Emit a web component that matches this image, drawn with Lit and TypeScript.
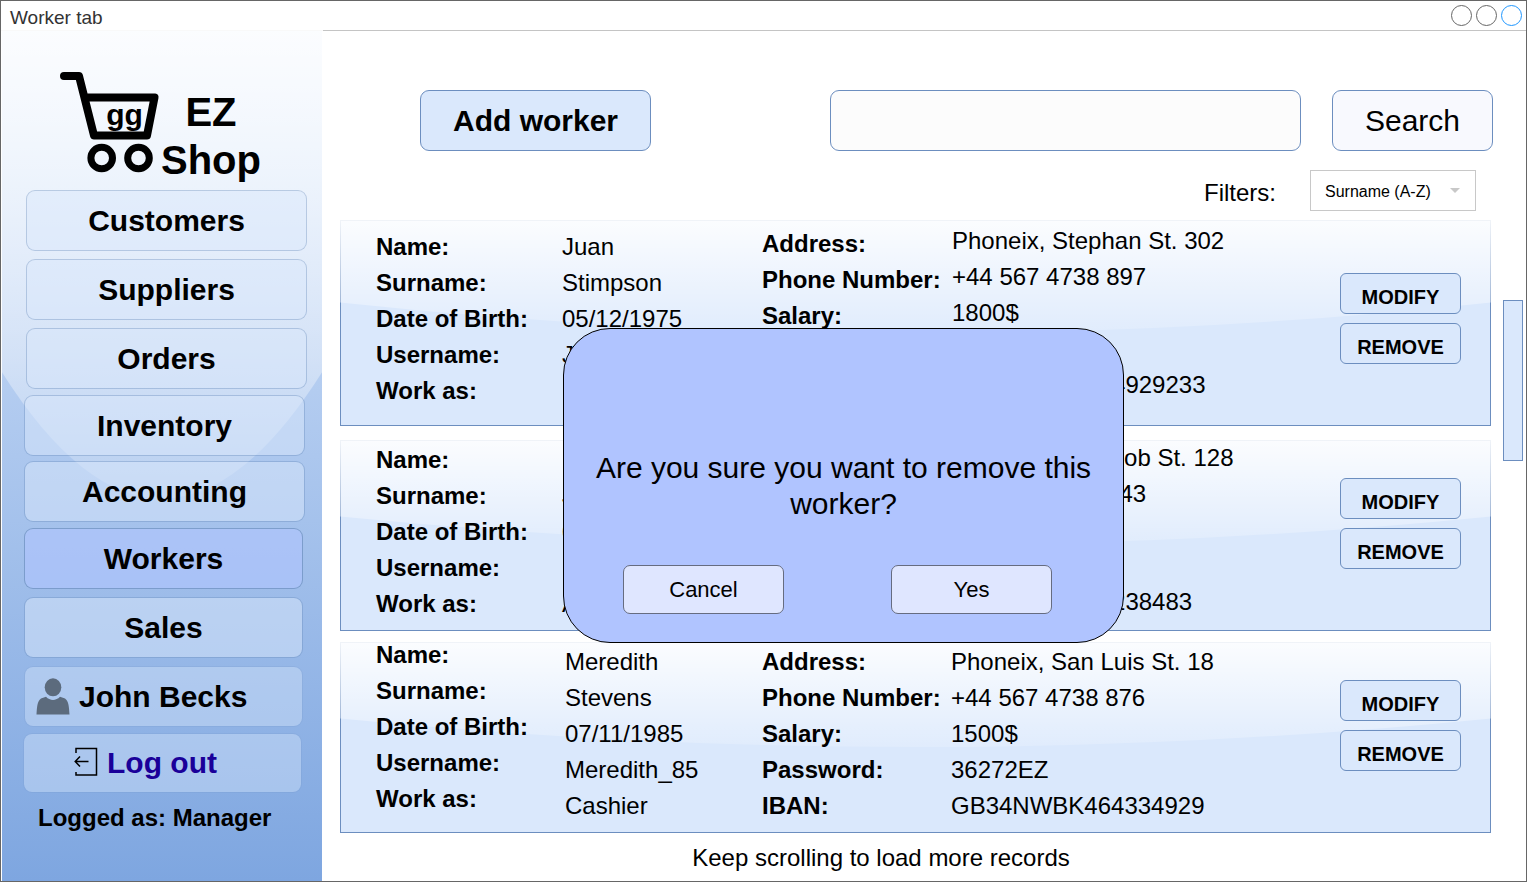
import { LitElement, html, css } from "lit";
import { customElement, property, state } from "lit/decorators.js";
import { classMap } from "lit/directives/class-map.js";

interface Worker {
  personal: string[];
  contact: string[];
  layout: string;
}

const PERSONAL_LABELS = ["Name:", "Surname:", "Date of Birth:", "Username:", "Work as:"];
const CONTACT_LABELS = ["Address:", "Phone Number:", "Salary:", "Password:", "IBAN:"];

const WORKERS: Worker[] = [
  {
    personal: ["Juan", "Stimpson", "05/12/1975", "Juan_75", "Manager"],
    contact: ["Phoneix, Stephan St. 302", "+44 567 4738 897", "1800$", "48213EZ", "GB34NWBK464929233"],
    layout: "roomy",
  },
  {
    personal: ["Robert", "Jackson", "03/08/1981", "Robert_81", "Accountant"],
    contact: ["Phoneix, W. Jacob St. 128", "+44 567 4738 843", "1600$", "59120EZ", "GB34NWBK46238483"],
    layout: "compact",
  },
  {
    personal: ["Meredith", "Stevens", "07/11/1985", "Meredith_85", "Cashier"],
    contact: ["Phoneix, San Luis St. 18", "+44 567 4738 876", "1500$", "36272EZ", "GB34NWBK464334929"],
    layout: "dense",
  },
];

const NAV_GROUPS = [
  { id: "first", items: ["Customers", "Suppliers", "Orders"] },
  { id: "second", items: ["Inventory", "Accounting"] },
];

/* Curved highlight that covers the upper part of a panel. */
const gloss = html`<svg class="gloss" viewBox="0 0 100 100" preserveAspectRatio="none" aria-hidden="true">
  <defs>
    <linearGradient id="shine" gradientUnits="userSpaceOnUse" x1="0" y1="0" x2="0" y2="60">
      <stop offset="0" stop-color="#fff" stop-opacity="0.9"></stop>
      <stop offset="1" stop-color="#fff" stop-opacity="0.1"></stop>
    </linearGradient>
  </defs>
  <path d="M0 0V40Q50 70 100 40V0Z" fill="url(#shine)"></path>
</svg>`;

const shared = css`
  * {
    box-sizing: border-box;
  }
  button,
  input,
  select {
    font: inherit;
    color: inherit;
    margin: 0;
    padding: 0;
  }
  button {
    cursor: pointer;
  }
  .gloss {
    position: absolute;
    inset: -1px;
    width: calc(100% + 2px);
    height: calc(100% + 2px);
    pointer-events: none;
  }
`;

@customElement("worker-card")
export class WorkerCard extends LitElement {
  @property({ attribute: false }) worker!: Worker;

  static styles = [
    shared,
    css`
      :host {
        display: flow-root;
      }
      .card {
        position: relative;
        display: grid;
        grid-template-columns: 186px 200px 190px 1fr 121px;
        padding: 0 29px 14px 35px;
        border: 1px solid #6c8ebf;
        background: #dae8fc;
        font-size: 24px;
        line-height: 24px;
      }
      .column {
        position: relative;
        display: flex;
        flex-direction: column;
        gap: 12px;
        white-space: nowrap;
      }
      .label {
        font-weight: bold;
      }
      .actions {
        position: relative;
        display: flex;
        flex-direction: column;
        gap: 9px;
        padding-top: 37px;
      }
      .action {
        height: 41px;
        padding-top: 6px;
        border: 1px solid #6c8ebf;
        border-radius: 6px;
        background: #dae8fc;
        font-size: 20px;
        font-weight: bold;
      }
      .roomy {
        margin-bottom: 3px;
        padding-bottom: 22px;
      }
      .roomy .personal {
        padding-top: 14px;
      }
      .roomy .contact.label {
        padding-top: 11px;
      }
      .roomy .contact {
        padding-top: 8px;
      }
      .roomy .actions {
        padding-top: 52px;
      }
      .compact .column {
        padding-top: 7px;
      }
      .compact .contact {
        padding-top: 5px;
      }
      .dense {
        grid-template-columns: 189px 197px 189px 1fr 121px;
      }
      .dense .column {
        padding-top: 7px;
      }
      .dense .personal.label {
        padding-top: 0;
      }
    `,
  ];

  private column(kind: string, lines: string[]) {
    return html`<div class="column ${kind}">${lines.map((l) => html`<span>${l}</span>`)}</div>`;
  }

  render() {
    const w = this.worker;
    return html`<article class="card ${w.layout}">
      ${gloss} ${this.column("personal label", PERSONAL_LABELS)} ${this.column("personal", w.personal)}
      ${this.column("contact label", CONTACT_LABELS)} ${this.column("contact", w.contact)}
      <div class="actions">
        <button class="action" type="button">MODIFY</button>
        <button class="action" type="button">REMOVE</button>
      </div>
    </article>`;
  }
}

@customElement("shop-sidebar")
export class ShopSidebar extends LitElement {
  @property() active = "Workers";

  static styles = [
    shared,
    css`
      :host {
        display: block;
        position: relative;
        background: linear-gradient(#dae8fc, #7ea6e0);
      }
      .content {
        position: relative;
      }
      .logo {
        display: flex;
        padding: 41px 0 0 57px;
      }
      .cart {
        width: 102px;
        height: 104px;
        flex: none;
      }
      .cart-text {
        font: bold 30px "Liberation Sans", Arial, sans-serif;
      }
      .brand {
        margin: 0;
        padding-top: 16px;
        width: 100px;
        font-size: 40px;
        line-height: 48px;
        text-align: center;
      }
      .nav {
        display: flex;
        flex-direction: column;
        gap: 6px;
        padding-top: 6px;
      }
      .group {
        display: flex;
        flex-direction: column;
        gap: 8px;
        padding: 0 19px 0 22px;
      }
      .first {
        padding: 0 15px 0 24px;
      }
      .second {
        gap: 5px;
        padding: 0 17px 0 22px;
      }
      .account {
        padding: 0 20px 0 21px;
      }
      .item {
        display: flex;
        align-items: center;
        justify-content: center;
        height: 61px;
        border: 1px solid rgba(108, 142, 191, 0.4);
        border-radius: 9px;
        background: rgba(218, 232, 252, 0.5);
        background-clip: padding-box;
        color: #000;
        font-size: 30px;
        font-weight: bold;
        text-decoration: none;
      }
      .item.active {
        background-color: rgba(176, 196, 255, 0.6);
        border-color: rgba(108, 142, 191, 0.7);
      }
      .item.user {
        justify-content: flex-start;
        gap: 9px;
        padding-left: 11px;
      }
      .item.user,
      .item.logout {
        background-color: rgba(218, 232, 252, 0.4);
        border-color: rgba(108, 142, 191, 0.15);
      }
      .item.logout {
        gap: 9px;
        height: 60px;
        padding-right: 34px;
        color: #1a0099;
      }
      .user-icon {
        width: 34px;
        height: 38px;
      }
      .exit-icon {
        width: 24px;
        height: 32px;
      }
      .role {
        margin: 0;
        padding: 11px 0 0 36px;
        font-size: 24px;
        line-height: 28px;
        font-weight: bold;
      }
    `,
  ];

  private item(name: string) {
    return html`<a href="#${name.toLowerCase()}" class=${classMap({ item: true, active: name === this.active })}>${name}</a>`;
  }

  render() {
    return html`${gloss}
      <div class="content">
        <div class="logo">
          <svg class="cart" viewBox="0 0 102 104" role="img" aria-label="gg cart">
            <g fill="none" stroke="#000" stroke-width="8" stroke-linecap="round" stroke-linejoin="round">
              <path d="M5 4H20L35 63.500H88L95.500 25.500H27"></path>
              <circle cx="42.700" cy="86" r="10.800" stroke-width="7"></circle>
              <circle cx="79.500" cy="86" r="10.800" stroke-width="7"></circle>
            </g>
            <text class="cart-text" x="65.500" y="53" text-anchor="middle">gg</text>
          </svg>
          <h1 class="brand">EZ Shop</h1>
        </div>
        <nav class="nav">
          ${NAV_GROUPS.map((g) => html`<div class="group ${g.id}">${g.items.map((n) => this.item(n))}</div>`)}
          <div class="group">
            ${this.item("Workers")} ${this.item("Sales")}
            <a href="#profile" class="item user">
              <svg class="user-icon" viewBox="0 0 34 38" aria-hidden="true">
                <g fill="#5c6b7d">
                  <ellipse cx="17" cy="9.300" rx="8.300" ry="9"></ellipse>
                  <path d="M0.500 36.500C1 30 1 23 5 20.500L10 18.800C14 23 20 23 24 18.800L29 20.500C33 23 33 30 33.500 36.500Z"></path>
                </g>
              </svg>
              John Becks
            </a>
          </div>
          <div class="group account">
            <a href="#logout" class="item logout">
              <svg class="exit-icon" viewBox="0 0 24 32" fill="none" stroke="#000" stroke-width="1.500" aria-hidden="true">
                <path d="M2 6V1.500H22.500V28H2V25"></path>
                <path d="M14.500 14.500H1.500M6 9.500L1.200 14.500L6 19.500"></path>
              </svg>
              Log out
            </a>
          </div>
        </nav>
        <p class="role">Logged as: Manager</p>
      </div>`;
  }
}

@customElement("app-root")
export class AppRoot extends LitElement {
  @state() private confirming = true;

  static styles = [
    shared,
    css`
      :host {
        display: block;
        position: relative;
        min-height: 100vh;
        padding: 0 1px 1px 0;
        box-sizing: border-box;
        background: #fff;
        color: #000;
        font-family: "Liberation Sans", Arial, Helvetica, sans-serif;
      }
      .window {
        display: flex;
        flex-direction: column;
        min-height: calc(100vh - 1px);
        border: 1px solid #666;
      }
      .titlebar {
        display: flex;
        align-items: flex-start;
        justify-content: space-between;
        height: 30px;
        padding: 4px 4px 0 9px;
        border-bottom: 1px solid #c4c4c4;
        color: #333;
        font-size: 19px;
        line-height: 26px;
      }
      .controls {
        display: flex;
        gap: 4px;
      }
      .control {
        width: 21px;
        height: 21px;
        border: 1px solid #666;
        border-radius: 50%;
        background: none;
      }
      .control.blue {
        border-color: #1f97ff;
      }
      .body {
        flex: 1;
        display: grid;
        grid-template-columns: 320px 1fr;
        padding-left: 1px;
      }
      .toolbar {
        display: flex;
        gap: 31px;
        padding: 59px 33px 0 98px;
      }
      .add,
      .query,
      .search {
        height: 61px;
        border: 1px solid #6c8ebf;
        border-radius: 9px;
        font-size: 30px;
      }
      .add {
        width: 231px;
        background: #dae8fc;
        font-weight: bold;
      }
      .query {
        flex: 0 1 471px;
        min-width: 0;
        margin-left: auto;
        padding: 0 16px;
        background: #fcfcfc;
      }
      .search {
        width: 161px;
        background: #f8f9fe;
      }
      .filters {
        display: flex;
        align-items: center;
        justify-content: flex-end;
        gap: 34px;
        padding: 19px 50px 9px 0;
        font-size: 24px;
      }
      .filter-label {
        padding-top: 4px;
      }
      .select-box {
        position: relative;
        display: flex;
      }
      .filter {
        appearance: none;
        width: 166px;
        height: 41px;
        padding: 2px 30px 0 14px;
        border: 1px solid #c8c8c8;
        border-radius: 0;
        background: #fff;
        font-size: 16px;
      }
      .arrow {
        position: absolute;
        right: 16px;
        top: 18px;
        width: 10px;
        height: 5px;
        background: #c8c8c8;
        clip-path: polygon(0 0, 100% 0, 50% 100%);
        pointer-events: none;
      }
      .records {
        display: flex;
        gap: 12px;
        padding: 0 3px 0 18px;
      }
      .list {
        flex: 1;
        display: flex;
        flex-direction: column;
        gap: 11px;
      }
      .thumb {
        width: 20px;
        height: 161px;
        margin-top: 80px;
        border: 1px solid #6c8ebf;
        background: #dae8fc;
      }
      .more {
        margin: 0;
        padding: 11px 86px 0 0;
        font-size: 24px;
        line-height: 28px;
        text-align: center;
      }
      .dialog {
        position: absolute;
        left: 563px;
        top: 328px;
        width: 561px;
        margin: 0;
        padding: 121px 30px 28px;
        border: 1px solid #000;
        border-radius: 47px;
        background: #b0c4ff;
        color: inherit;
      }
      .question {
        margin: 0;
        font-size: 30px;
        line-height: 36px;
        text-align: center;
      }
      .answers {
        display: flex;
        justify-content: space-between;
        padding: 43px 41px 0 29px;
      }
      .answer {
        width: 161px;
        height: 49px;
        border: 1px solid #666c80;
        border-radius: 7px;
        background: #dfe6ff;
        font-size: 22px;
      }
    `,
  ];

  private close() {
    this.confirming = false;
  }

  render() {
    return html`<div class="window">
        <header class="titlebar">
          <span>Worker tab</span>
          <div class="controls">
            <button class="control" type="button" aria-label="Minimize"></button>
            <button class="control" type="button" aria-label="Maximize"></button>
            <button class="control blue" type="button" aria-label="Close"></button>
          </div>
        </header>
        <div class="body">
          <shop-sidebar active="Workers"></shop-sidebar>
          <main>
            <div class="toolbar">
              <button class="add" type="button">Add worker</button>
              <input class="query" type="search" aria-label="Search workers" />
              <button class="search" type="button">Search</button>
            </div>
            <div class="filters">
              <label class="filter-label" for="filter">Filters:</label>
              <div class="select-box">
                <select class="filter" id="filter">
                  <option>Surname (A-Z)</option>
                </select>
                <span class="arrow"></span>
              </div>
            </div>
            <div class="records">
              <div class="list">${WORKERS.map((w) => html`<worker-card .worker=${w}></worker-card>`)}</div>
              <div class="thumb"></div>
            </div>
            <p class="more">Keep scrolling to load more records</p>
          </main>
        </div>
      </div>
      ${this.confirming
        ? html`<dialog class="dialog" open aria-labelledby="question">
            <p class="question" id="question">Are you sure you want to remove this worker?</p>
            <div class="answers">
              <button class="answer" type="button" @click=${this.close}>Cancel</button>
              <button class="answer" type="button" @click=${this.close}>Yes</button>
            </div>
          </dialog>`
        : null}`;
  }
}
